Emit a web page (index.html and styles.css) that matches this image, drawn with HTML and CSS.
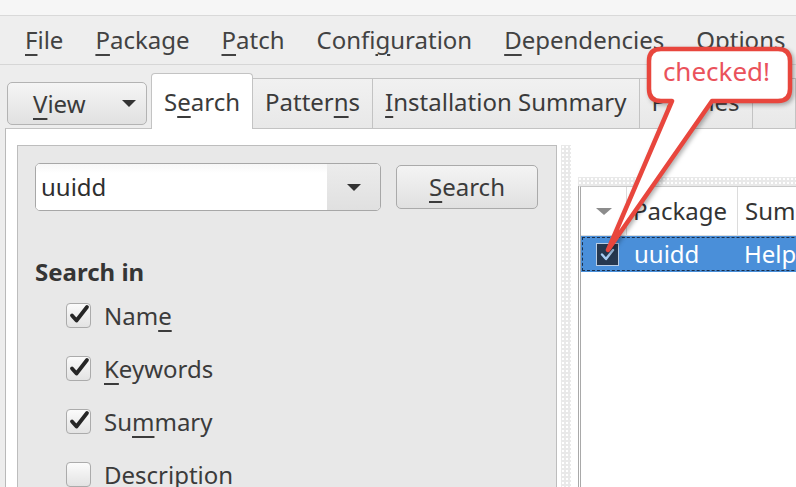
FILE: index.html
```html
<!DOCTYPE html>
<html>
<head>
<meta charset="utf-8">
<link rel="stylesheet" href="styles.css">
</head>
<body>
<div class="titlestrip"></div>
<nav class="menubar">
  <span class="menu"><u>F</u>ile</span>
  <span class="menu"><u>P</u>ackage</span>
  <span class="menu"><u>P</u>atch</span>
  <span class="menu">Confi<u>g</u>uration</span>
  <span class="menu"><u>D</u>ependencies</span>
  <span class="menu"><u>O</u>ptions</span>
</nav>
<div class="tabrow">
  <div class="viewbtn"><span><u>V</u>iew</span><span class="tri"></span></div>
  <div class="tabs">
    <div class="tab active">S<u>e</u>arch</div>
    <div class="tab">Patter<u>n</u>s</div>
    <div class="tab"><u>I</u>nstallation Summary</div>
    <div class="tab">Patches</div>
    <div class="tab filler"></div>
  </div>
</div>
<div class="frame">
  <section class="searchpane">
    <div class="searchrow">
      <div class="combo">
        <span class="combo-value">uuidd</span>
        <span class="combo-drop"><span class="tri"></span></span>
      </div>
      <div class="btn"><u>S</u>earch</div>
    </div>
    <div class="group-label">Search in</div>
    <div class="checklist">
      <div class="check-row">
        <span class="checkbox on"><svg viewBox="0 0 25 25" width="25" height="25"><path d="M6 12.5 L10.5 17.5 L21 4" /></svg></span>
        <span class="check-label">Nam<u>e</u></span>
      </div>
      <div class="check-row">
        <span class="checkbox on"><svg viewBox="0 0 25 25" width="25" height="25"><path d="M6 12.5 L10.5 17.5 L21 4" /></svg></span>
        <span class="check-label"><u>K</u>eywords</span>
      </div>
      <div class="check-row">
        <span class="checkbox on"><svg viewBox="0 0 25 25" width="25" height="25"><path d="M6 12.5 L10.5 17.5 L21 4" /></svg></span>
        <span class="check-label">Su<u>m</u>mary</span>
      </div>
      <div class="check-row">
        <span class="checkbox"></span>
        <span class="check-label">Description</span>
      </div>
    </div>
  </section>
  <div class="splitter"></div>
  <section class="results">
    <div class="hsplit"></div>
    <div class="table">
      <div class="thead">
        <div class="th th-status"><span class="sort"></span></div>
        <div class="th th-pkg">Package</div>
        <div class="th th-sum">Summary</div>
      </div>
      <div class="trow selected">
        <div class="td td-status">
          <span class="rowcheck"><svg viewBox="0 0 23 23" width="23" height="23"><path d="M6 11.5 L10 16 L17 7" /></svg></span>
        </div>
        <div class="td td-pkg">uuidd</div>
        <div class="td td-sum">Helper daemon</div>
      </div>
    </div>
  </section>
</div>
<div class="overlay">
  <svg class="callout" width="796" height="487" viewBox="0 0 796 487">
    <path d="M661 49 H778 Q790 49 790 61 V89 Q790 101 778 101 H712 L608 250 L672 101 H661 Q649 101 649 89 V61 Q649 49 661 49 Z" />
  </svg>
  <div class="callout-text">checked!</div>
</div>
</body>
</html>
```
FILE: styles.css
```css
* { box-sizing: border-box; }
html, body { margin: 0; padding: 0; }
body {
  width: 796px;
  height: 487px;
  overflow: hidden;
  position: relative;
  background: #ededed;
  font-family: "Noto Sans", "Open Sans", sans-serif;
  font-size: 24px;
  color: #3b3b3b;
}
u {
  text-decoration: underline;
  text-decoration-thickness: 1.5px;
  text-underline-offset: 5px;
}
.titlestrip {
  height: 16px;
  background: #f6f6f6;
  border-bottom: 1px solid #d9d9d9;
}
.menubar {
  display: flex;
  align-items: center;
  height: 49px;
  padding-left: 9px;
  background: #eeeeee;
  border-bottom: 1px solid #d6d6d6;
  color: #424242;
}
.menu {
  padding: 0 16px;
  line-height: 30px;
  white-space: nowrap;
}
.tabrow {
  display: flex;
  align-items: flex-end;
  height: 63px;
  padding-left: 7px;
}
.viewbtn {
  flex: none;
  width: 140px;
  height: 43px;
  margin: 0 4px 3px 0;
  display: flex;
  align-items: center;
  justify-content: space-between;
  padding: 0 10px 0 25px;
  line-height: 30px;
  border: 1px solid #b3b3b3;
  border-radius: 5px;
  background: linear-gradient(#f5f5f5, #e1e1e1);
}
.tri {
  display: inline-block;
  width: 0;
  height: 0;
  border-left: 7px solid transparent;
  border-right: 7px solid transparent;
  border-top: 7px solid #333;
}
.tabs {
  display: flex;
  align-items: flex-end;
  flex: 1;
  min-width: 0;
}
.tab {
  flex: none;
  height: 50px;
  display: flex;
  align-items: flex-end;
  padding: 0 12px 11px;
  line-height: 30px;
  white-space: nowrap;
  border: 1px solid #c3c3c3;
  border-left: none;
  border-bottom: none;
  background: linear-gradient(#f1f1f1, #e8e8e8);
}
.tab.active {
  height: 56px;
  margin-bottom: -1px;
  padding: 0 12px 12px;
  border-left: 1px solid #c3c3c3;
  border-radius: 4px 4px 0 0;
  background: #ffffff;
  position: relative;
  z-index: 1;
}
.tab.filler {
  flex: 1;
}
.frame {
  display: flex;
  align-items: flex-start;
  height: 359px;
  margin-left: 5px;
  padding: 16px 0 0 11px;
  background: #ffffff;
  border-left: 1px solid #b9b9b9;
  border-top: 1px solid #c3c3c3;
  overflow: hidden;
}
.searchpane {
  flex: none;
  width: 540px;
  height: 400px;
  padding: 17px 0 0 17px;
  background: #e8e8e8;
  border: 1px solid #bdbdbd;
  border-bottom: none;
}
.searchrow {
  display: flex;
  align-items: center;
  gap: 15px;
  height: 48px;
}
.combo {
  display: flex;
  width: 346px;
  height: 48px;
  border: 1px solid #a7a7a7;
  border-radius: 5px;
  background: #ffffff;
  overflow: hidden;
}
.combo-value {
  flex: 1;
  display: flex;
  align-items: center;
  padding-left: 5px;
  line-height: 30px;
  color: #2e2e2e;
  background: linear-gradient(#f7f7f7, #ffffff 20%);
}
.combo-drop {
  width: 53px;
  display: flex;
  align-items: center;
  justify-content: center;
  background: linear-gradient(#ececec, #e0e0e0);
}
.btn {
  width: 142px;
  height: 44px;
  display: flex;
  align-items: center;
  justify-content: center;
  line-height: 30px;
  border: 1px solid #aaaaaa;
  border-radius: 5px;
  background: linear-gradient(#f4f4f4, #e0e0e0);
}
.group-label {
  margin-top: 46px;
  line-height: 30px;
  font-weight: bold;
  color: #353535;
}
.checklist {
  margin-top: 2px;
  padding-left: 31px;
}
.check-row {
  display: flex;
  align-items: center;
  height: 53px;
}
.checkbox {
  flex: none;
  width: 25px;
  height: 25px;
  border: 1px solid #ababab;
  border-radius: 4px;
  background: linear-gradient(#fbfbfb, #e3e3e3);
  position: relative;
}
.checkbox svg {
  position: absolute;
  left: -1px;
  top: -1px;
  overflow: visible;
}
.checkbox path {
  fill: none;
  stroke: #262626;
  stroke-width: 3.8;
  stroke-linecap: round;
  stroke-linejoin: round;
}
.check-label {
  margin-left: 13px;
  line-height: 30px;
}
.splitter {
  flex: none;
  width: 10px;
  height: 400px;
  margin-left: 4px;
  background-color: #e9e9e9;
  background-image: radial-gradient(circle, #ffffff 1px, transparent 1.3px);
  background-size: 4px 4px;
}
.results {
  flex: 1;
  margin: 32px 0 0 7px;
  height: 400px;
}
.hsplit {
  height: 9px;
  background-color: #e9e9e9;
  background-image: radial-gradient(circle, #ffffff 1px, transparent 1.3px);
  background-size: 4px 4px;
}
.table {
  height: 380px;
  border-left: 3px double #a9a9a9;
  border-top: 1px solid #c9c9c9;
  background: #ffffff;
}
.thead {
  display: flex;
  height: 49px;
  border-bottom: 1px solid #dcdcdc;
}
.th {
  display: flex;
  align-items: center;
  line-height: 30px;
  white-space: nowrap;
  color: #333;
}
.th-status {
  width: 46px;
  flex: none;
  justify-content: center;
  border-right: 1px solid #dcdcdc;
}
.sort {
  width: 0;
  height: 0;
  border-left: 8px solid transparent;
  border-right: 8px solid transparent;
  border-top: 7px solid #8c8c8c;
}
.th-pkg {
  width: 111px;
  flex: none;
  padding-left: 6px;
  border-right: 1px solid #dcdcdc;
}
.th-sum {
  padding-left: 7px;
}
.trow {
  display: flex;
  align-items: center;
  height: 36px;
  white-space: nowrap;
}
.trow.selected {
  background: #4a8fd9;
  color: #ffffff;
  outline: 1px dashed #1b2f4a;
  outline-offset: -2px;
}
.td {
  line-height: 30px;
}
.td-status {
  width: 46px;
  flex: none;
  padding-left: 15px;
  display: flex;
  align-items: center;
}
.rowcheck {
  width: 23px;
  height: 23px;
  display: block;
  background: #26384f;
  border: 1px solid #b9cde4;
}
.rowcheck svg {
  display: block;
  margin: -1px;
}
.rowcheck path {
  fill: none;
  stroke: #a9cdf2;
  stroke-width: 2.4;
  stroke-linecap: round;
  stroke-linejoin: round;
}
.td-pkg {
  width: 111px;
  flex: none;
  padding-left: 7px;
}
.td-sum {
  padding-left: 6px;
}
.overlay {
  position: absolute;
  left: 0;
  top: 0;
  width: 796px;
  height: 487px;
  pointer-events: none;
}
.callout {
  position: absolute;
  left: 0;
  top: 0;
}
.callout path {
  fill: #ffffff;
  stroke: #e8463d;
  stroke-width: 4.5;
  stroke-linejoin: round;
  filter: drop-shadow(2px 2px 2px rgba(0, 0, 0, 0.3));
}
.callout-text {
  position: absolute;
  left: 646px;
  top: 54px;
  width: 141px;
  text-align: center;
  font-size: 26px;
  line-height: 34px;
  color: #ea525b;
}
```
